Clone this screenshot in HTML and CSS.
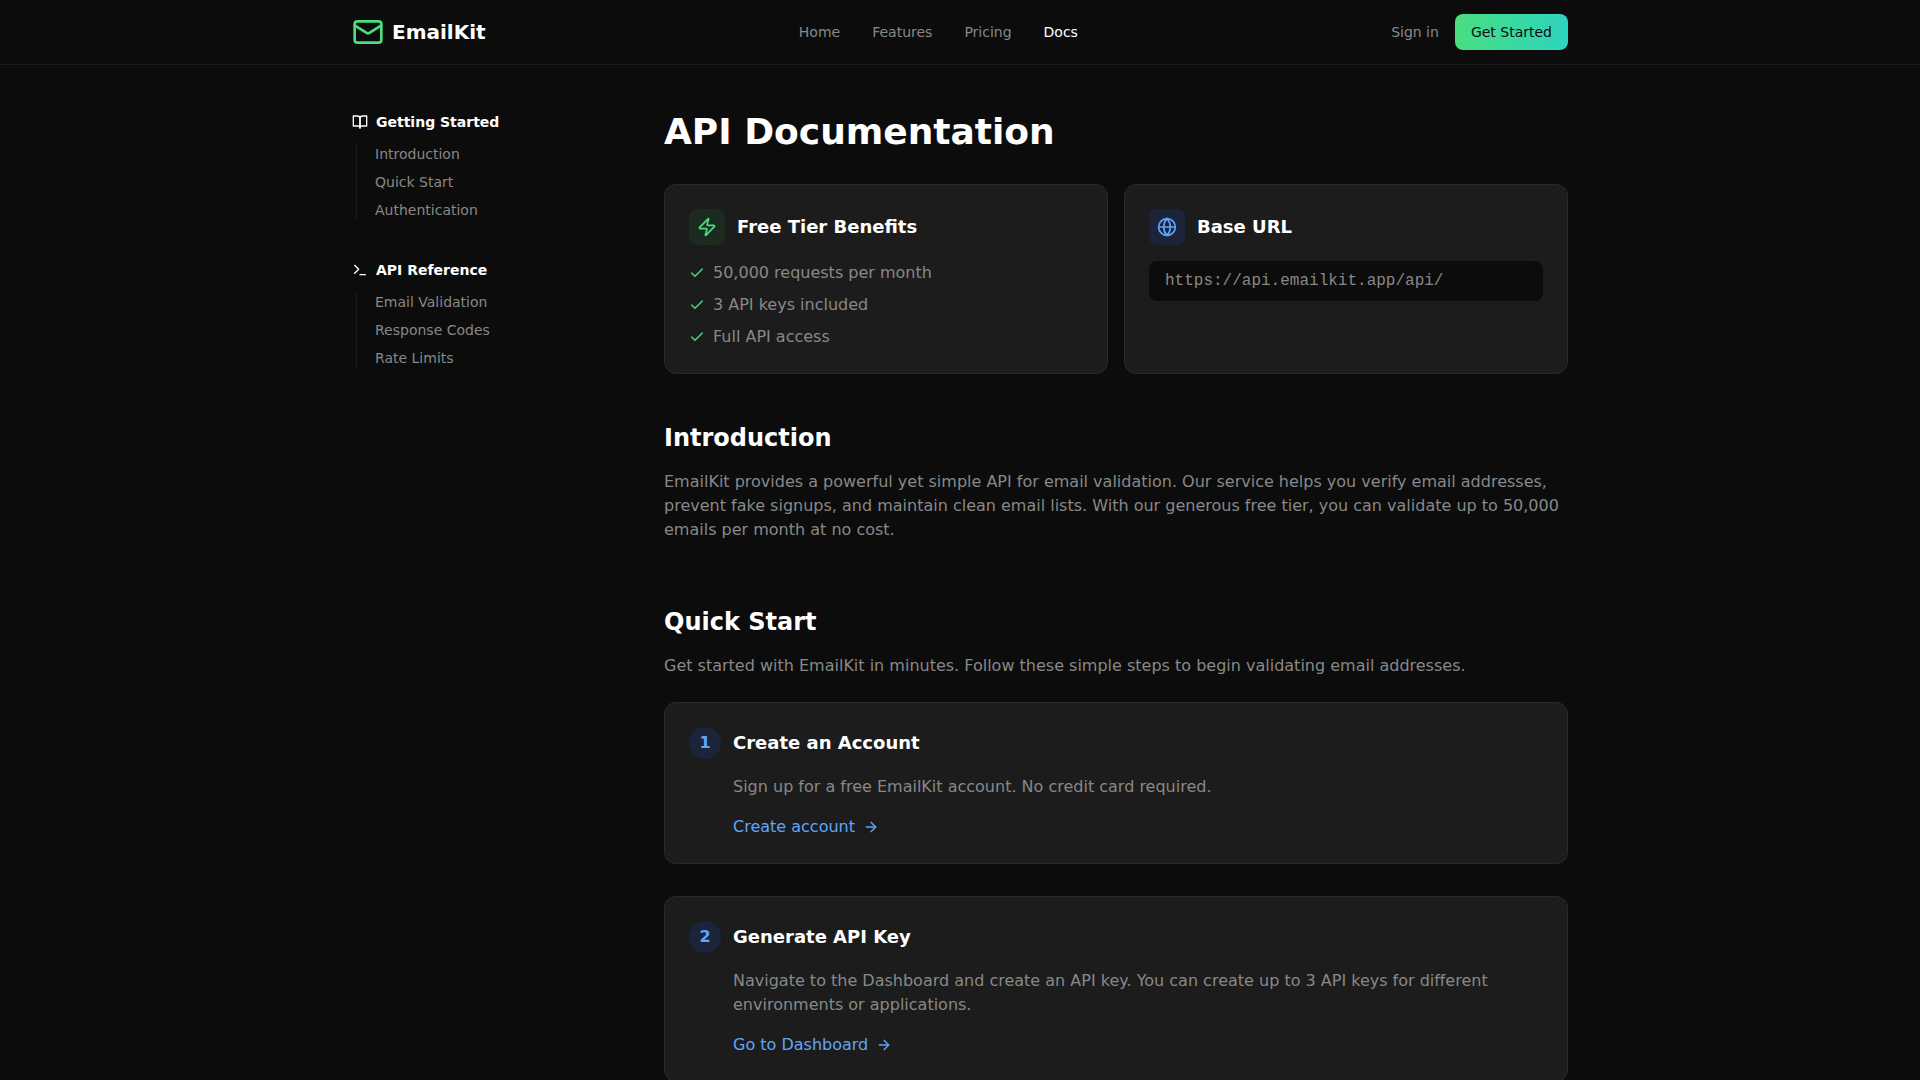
FILE: index.html
```
<!DOCTYPE html>
<html lang="en">
<head>
  <meta charset="UTF-8">
  <meta name="viewport" content="width=device-width, initial-scale=1.0">
  <title>EmailKit - API Documentation</title>
  <link rel="stylesheet" href="styles.css">
</head>
<body>

  <!-- Top navigation -->
  <header class="header">
    <div class="container header-inner">
      <a href="#" class="logo">
        <svg class="icon icon-logo" viewBox="0 0 24 24"><rect width="20" height="16" x="2" y="4" rx="2"/><path d="m22 7-8.97 5.7a1.94 1.94 0 0 1-2.06 0L2 7"/></svg>
        <span>EmailKit</span>
      </a>
      <nav class="nav">
        <a href="#">Home</a>
        <a href="#">Features</a>
        <a href="#">Pricing</a>
        <a href="#" class="active">Docs</a>
      </nav>
      <div class="header-actions">
        <a href="#" class="sign-in">Sign in</a>
        <button type="button" class="get-started">Get Started</button>
      </div>
    </div>
  </header>

  <div class="container layout">

    <!-- Sidebar -->
    <aside class="sidebar">
      <div class="side-group">
        <h3><svg class="icon icon-sm" viewBox="0 0 24 24"><path d="M2 3h6a4 4 0 0 1 4 4v14a3 3 0 0 0-3-3H2z"/><path d="M22 3h-6a4 4 0 0 0-4 4v14a3 3 0 0 1 3-3h7z"/></svg>Getting Started</h3>
        <ul>
          <li><a href="#introduction">Introduction</a></li>
          <li><a href="#quick-start">Quick Start</a></li>
          <li><a href="#authentication">Authentication</a></li>
        </ul>
      </div>
      <div class="side-group">
        <h3><svg class="icon icon-sm" viewBox="0 0 24 24"><polyline points="4 17 10 11 4 5"/><line x1="12" x2="20" y1="19" y2="19"/></svg>API Reference</h3>
        <ul>
          <li><a href="#email-validation">Email Validation</a></li>
          <li><a href="#response-codes">Response Codes</a></li>
          <li><a href="#rate-limits">Rate Limits</a></li>
        </ul>
      </div>
    </aside>

    <!-- Main content -->
    <main>
      <h1>API Documentation</h1>

      <div class="overview">
        <div class="card">
          <div class="card-head">
            <span class="badge green"><svg class="icon icon-md" viewBox="0 0 24 24"><path d="M4 14a1 1 0 0 1-.78-1.63l9.9-10.2a.5.5 0 0 1 .86.46l-1.92 6.02A1 1 0 0 0 13 10h7a1 1 0 0 1 .78 1.63l-9.9 10.2a.5.5 0 0 1-.86-.46l1.92-6.02A1 1 0 0 0 11 14z"/></svg></span>
            <h3>Free Tier Benefits</h3>
          </div>
          <ul class="benefits">
            <li><svg class="icon icon-sm" viewBox="0 0 24 24"><path d="M20 6 9 17l-5-5"/></svg>50,000 requests per month</li>
            <li><svg class="icon icon-sm" viewBox="0 0 24 24"><path d="M20 6 9 17l-5-5"/></svg>3 API keys included</li>
            <li><svg class="icon icon-sm" viewBox="0 0 24 24"><path d="M20 6 9 17l-5-5"/></svg>Full API access</li>
          </ul>
        </div>
        <div class="card">
          <div class="card-head">
            <span class="badge blue"><svg class="icon icon-md" viewBox="0 0 24 24"><circle cx="12" cy="12" r="10"/><path d="M12 2a14.5 14.5 0 0 0 0 20 14.5 14.5 0 0 0 0-20"/><path d="M2 12h20"/></svg></span>
            <h3>Base URL</h3>
          </div>
          <code class="base-url">https://api.emailkit.app/api/</code>
        </div>
      </div>

      <section id="introduction">
        <h2>Introduction</h2>
        <p>EmailKit provides a powerful yet simple API for email validation. Our service helps you verify email addresses, prevent fake signups, and maintain clean email lists. With our generous free tier, you can validate up to 50,000 emails per month at no cost.</p>
      </section>

      <section id="quick-start">
        <h2>Quick Start</h2>
        <p>Get started with EmailKit in minutes. Follow these simple steps to begin validating email addresses.</p>

        <div class="steps">
          <div class="card">
            <div class="card-head">
              <span class="step-number blue">1</span>
              <h3>Create an Account</h3>
            </div>
            <div class="step-body">
              <p>Sign up for a free EmailKit account. No credit card required.</p>
              <a href="#">Create account <svg class="icon icon-sm" viewBox="0 0 24 24"><path d="M5 12h14"/><path d="m12 5 7 7-7 7"/></svg></a>
            </div>
          </div>
          <div class="card">
            <div class="card-head">
              <span class="step-number blue">2</span>
              <h3>Generate API Key</h3>
            </div>
            <div class="step-body">
              <p>Navigate to the Dashboard and create an API key. You can create up to 3 API keys for different environments or applications.</p>
              <a href="#">Go to Dashboard <svg class="icon icon-sm" viewBox="0 0 24 24"><path d="M5 12h14"/><path d="m12 5 7 7-7 7"/></svg></a>
            </div>
          </div>
        </div>
      </section>
    </main>
  </div>

</body>
</html>
```
FILE: styles.css
```
* {
  box-sizing: border-box;
  margin: 0;
  padding: 0;
}

body {
  font-family: "DejaVu Sans", sans-serif;
  font-size: 16px;
  line-height: 24px;
  background-color: #0c0c0c;
  color: #888;
}

h1, h2, h3 {
  color: #fff;
}

h1 {
  font-size: 36px;
  line-height: 40px;
  margin-bottom: 32px;
}

h2 {
  font-size: 24px;
  line-height: 32px;
  margin-bottom: 16px;
}

a {
  color: inherit;
  text-decoration: none;
}

ul {
  list-style: none;
}

.container {
  max-width: 1280px;
  margin: 0 auto;
  padding: 0 32px;
}

/* Icons */
.icon {
  flex-shrink: 0;
  fill: none;
  stroke: currentColor;
  stroke-width: 2;
  stroke-linecap: round;
  stroke-linejoin: round;
}

.icon-sm {
  width: 16px;
  height: 16px;
}

.icon-md {
  width: 20px;
  height: 20px;
}

.icon-logo {
  width: 32px;
  height: 32px;
  color: #4ade80;
}

/* Header */
.header {
  position: sticky;
  top: 0;
  z-index: 10;
  background-color: #0c0c0c;
  border-bottom: 1px solid #1c1c1c;
}

.header-inner {
  display: flex;
  align-items: center;
  justify-content: space-between;
  height: 64px;
  font-size: 14px;
  line-height: 20px;
}

.logo {
  display: flex;
  align-items: center;
  gap: 8px;
  color: #fff;
  font-size: 20px;
  font-weight: bold;
}

.nav {
  display: flex;
  gap: 32px;
}

.nav a:hover, .nav .active {
  color: #fff;
}

.header-actions {
  display: flex;
  align-items: center;
  gap: 16px;
}

.get-started {
  padding: 8px 16px;
  border: none;
  border-radius: 8px;
  background: linear-gradient(to right, #4ade80, #2dd4bf);
  color: #0c0c0c;
  font: inherit;
  cursor: pointer;
}

/* Page layout */
.layout {
  display: grid;
  grid-template-columns: 280px 1fr;
  gap: 32px;
  padding-top: 47px;
  padding-bottom: 48px;
}

.side-group {
  margin-bottom: 40px;
  font-size: 14px;
  line-height: 20px;
}

.side-group h3 {
  display: flex;
  align-items: center;
  gap: 8px;
  margin-bottom: 12px;
  font-size: 14px;
}

.side-group ul {
  display: flex;
  flex-direction: column;
  gap: 8px;
  margin-left: 4px;
  padding-left: 18px;
  border-left: 1px solid #1c1c1c;
}

.side-group a:hover {
  color: #fff;
}

/* Cards */
.overview {
  display: grid;
  grid-template-columns: 1fr 1fr;
  gap: 16px;
  margin-bottom: 48px;
}

.card {
  padding: 24px;
  background-color: #1c1c1c;
  border: 1px solid #2a2a2a;
  border-radius: 12px;
}

.card-head {
  display: flex;
  align-items: center;
  gap: 12px;
  margin-bottom: 16px;
}

.card-head h3 {
  font-size: 18px;
  line-height: 28px;
}

.badge {
  display: flex;
  padding: 8px;
  border-radius: 8px;
}

.green {
  background-color: #1b2b20;
  color: #4ade80;
}

.blue {
  background-color: #1c243c;
  color: #60a5fa;
}

.benefits {
  display: flex;
  flex-direction: column;
  gap: 8px;
}

.benefits li {
  display: flex;
  align-items: center;
  gap: 8px;
}

.benefits .icon {
  color: #4ade80;
}

.base-url {
  display: block;
  padding: 8px 16px;
  border-radius: 8px;
  background-color: #0c0c0c;
  font-family: "Liberation Mono", monospace;
  font-size: 16px;
}

/* Sections */
section {
  margin-bottom: 64px;
}

.steps {
  display: flex;
  flex-direction: column;
  gap: 32px;
  margin-top: 24px;
}

.step-number {
  display: flex;
  align-items: center;
  justify-content: center;
  width: 32px;
  height: 32px;
  border-radius: 50%;
  font-weight: bold;
}

.step-body {
  padding-left: 44px;
}

.step-body p {
  margin-bottom: 16px;
}

.step-body a {
  display: flex;
  align-items: center;
  gap: 8px;
  width: fit-content;
  color: #60a5fa;
}
```
